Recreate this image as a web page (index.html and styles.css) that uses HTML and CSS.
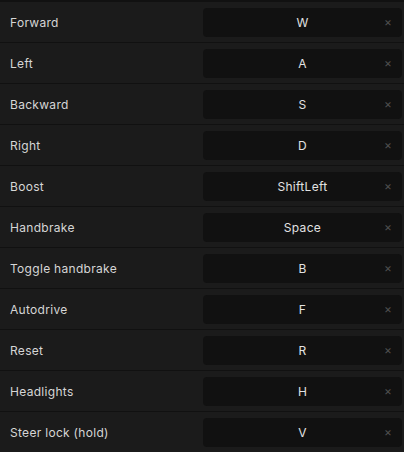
FILE: index.html
```html
<!DOCTYPE html>
<html>
<head>
<meta charset="utf-8">
<link rel="stylesheet" href="styles.css">
</head>
<body>
<div class="list">
  <div class="row"><span class="label">Forward</span><div class="key"><span class="key-text">W</span><span class="clear">×</span></div></div>
  <div class="row"><span class="label">Left</span><div class="key"><span class="key-text">A</span><span class="clear">×</span></div></div>
  <div class="row"><span class="label">Backward</span><div class="key"><span class="key-text">S</span><span class="clear">×</span></div></div>
  <div class="row"><span class="label">Right</span><div class="key"><span class="key-text">D</span><span class="clear">×</span></div></div>
  <div class="row"><span class="label">Boost</span><div class="key"><span class="key-text">ShiftLeft</span><span class="clear">×</span></div></div>
  <div class="row"><span class="label">Handbrake</span><div class="key"><span class="key-text">Space</span><span class="clear">×</span></div></div>
  <div class="row"><span class="label">Toggle handbrake</span><div class="key"><span class="key-text">B</span><span class="clear">×</span></div></div>
  <div class="row"><span class="label">Autodrive</span><div class="key"><span class="key-text">F</span><span class="clear">×</span></div></div>
  <div class="row"><span class="label">Reset</span><div class="key"><span class="key-text">R</span><span class="clear">×</span></div></div>
  <div class="row"><span class="label">Headlights</span><div class="key"><span class="key-text">H</span><span class="clear">×</span></div></div>
  <div class="row"><span class="label">Steer lock (hold)</span><div class="key"><span class="key-text">V</span><span class="clear">×</span></div></div>
</div>
</body>
</html>
```
FILE: styles.css
```css
html, body {
  margin: 0;
  padding: 0;
  background: #1b1b1b;
  overflow: hidden;
}
body {
  font-family: Inter, "DejaVu Sans", sans-serif;
  font-size: 12px;
  letter-spacing: 0.3px;
}
.list {
  display: flex;
  flex-direction: column;
  padding-top: 2px;
  background: #111111;
}
.row {
  display: grid;
  grid-template-columns: 1fr 199px;
  align-items: center;
  height: 40px;
  padding: 0 2px 0 10px;
  background: #1b1b1b;
  border-bottom: 1px solid #111111;
}
.label {
  color: #d6d6d6;
}
.key {
  position: relative;
  display: flex;
  align-items: center;
  justify-content: center;
  height: 29px;
  background: #111111;
  border-radius: 4px;
}
.key-text {
  color: #e2e2e2;
}
.clear {
  position: absolute;
  right: 10px;
  top: 50%;
  transform: translateY(-52%);
  color: #4e4e4e;
  font-size: 12px;
  letter-spacing: 0;
}
```
